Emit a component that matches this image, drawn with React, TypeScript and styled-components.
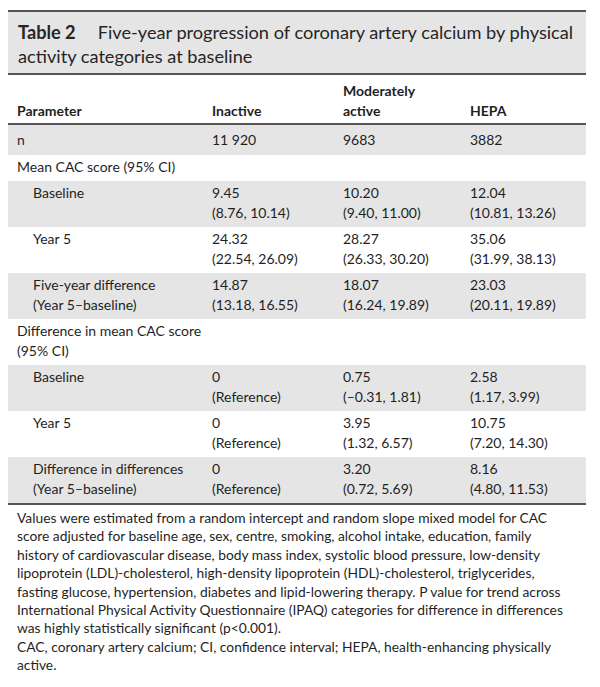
import React from "react";
import styled, { createGlobalStyle } from "styled-components";

const GlobalStyle = createGlobalStyle`
  html, body { margin: 0; padding: 0; background: #ffffff; }
  body { font-family: Lato, "Liberation Sans", sans-serif; color: #1f1f1f; }
`;

const Page = styled.div`
  padding: 10px 14px 0 8px;
  width: 578px;
`;

const TitleBar = styled.div`
  background: #e5e5e5;
  border-top: 2px solid #555;
  border-bottom: 2px solid #555;
  padding: 8px 10px 5px 10px;
  font-size: 18.2px;
  line-height: 24px;
  color: #262626;
`;

const TitleLabel = styled.span`
  font-weight: 700;
  margin-right: 22px;
`;

const TitleLine = styled.div`
  white-space: nowrap;
`;

const Grid = styled.div<{ $shade?: boolean; $pt?: number; $pb?: number }>`
  display: grid;
  grid-template-columns: 195px 131px 127px 1fr;
  padding: ${(p) => p.$pt ?? 2}px 0 ${(p) => p.$pb ?? 4}px 9px;
  background: ${(p) => (p.$shade ? "#e5e5e5" : "#ffffff")};
  font-size: 14px;
  line-height: 20px;
`;

const HeaderRow = styled(Grid)`
  align-items: end;
  font-weight: 700;
  border-bottom: 2px solid #555;
  padding-top: 6px;
  padding-bottom: 4px;
  height: 50px;
  box-sizing: border-box;
`;

const Cell = styled.div<{ $indent?: boolean; $span?: boolean }>`
  padding-left: ${(p) => (p.$indent ? 16 : 0)}px;
  grid-column: ${(p) => (p.$span ? "1 / span 2" : "auto")};
  white-space: nowrap;
`;

const Line = styled.div``;

const Body = styled.div`
  border-bottom: 2px solid #555;
`;

const Footnote = styled.div`
  padding: 4px 0 0 9px;
  font-size: 13.8px;
  line-height: 18.4px;
`;

const FootLine = styled.div`
  white-space: nowrap;
`;

type Row = {
  label: string[];
  indent?: boolean;
  shade?: boolean;
  values?: string[][];
  pt?: number;
  pb?: number;
};

const rows: Row[] = [
  { label: ["n"], shade: true, values: [["11 920"], ["9683"], ["3882"]], pt: 5, pb: 5 },
  { label: ["Mean CAC score (95% CI)"] },
  {
    label: ["Baseline"],
    indent: true,
    shade: true,
    values: [
      ["9.45", "(8.76, 10.14)"],
      ["10.20", "(9.40, 11.00)"],
      ["12.04", "(10.81, 13.26)"],
    ],
  },
  {
    label: ["Year 5"],
    indent: true,
    values: [
      ["24.32", "(22.54, 26.09)"],
      ["28.27", "(26.33, 30.20)"],
      ["35.06", "(31.99, 38.13)"],
    ],
  },
  {
    label: ["Five-year difference", "(Year 5–baseline)"],
    indent: true,
    shade: true,
    values: [
      ["14.87", "(13.18, 16.55)"],
      ["18.07", "(16.24, 19.89)"],
      ["23.03", "(20.11, 19.89)"],
    ],
  },
  { label: ["Difference in mean CAC score", "(95% CI)"] },
  {
    label: ["Baseline"],
    indent: true,
    shade: true,
    values: [
      ["0", "(Reference)"],
      ["0.75", "(–0.31, 1.81)"],
      ["2.58", "(1.17, 3.99)"],
    ],
  },
  {
    label: ["Year 5"],
    indent: true,
    values: [
      ["0", "(Reference)"],
      ["3.95", "(1.32, 6.57)"],
      ["10.75", "(7.20, 14.30)"],
    ],
  },
  {
    label: ["Difference in differences", "(Year 5–baseline)"],
    indent: true,
    shade: true,
    values: [
      ["0", "(Reference)"],
      ["3.20", "(0.72, 5.69)"],
      ["8.16", "(4.80, 11.53)"],
    ],
  },
];

const footLines = [
  "Values were estimated from a random intercept and random slope mixed model for CAC",
  "score adjusted for baseline age, sex, centre, smoking, alcohol intake, education, family",
  "history of cardiovascular disease, body mass index, systolic blood pressure, low-density",
  "lipoprotein (LDL)-cholesterol, high-density lipoprotein (HDL)-cholesterol, triglycerides,",
  "fasting glucose, hypertension, diabetes and lipid-lowering therapy. P value for trend across",
  "International Physical Activity Questionnaire (IPAQ) categories for difference in differences",
  "was highly statistically significant (p<0.001).",
  "CAC, coronary artery calcium; CI, confidence interval; HEPA, health-enhancing physically",
  "active.",
];

export default function App() {
  return (
    <>
      <GlobalStyle />
      <Page>
        <TitleBar>
          <TitleLine>
            <TitleLabel>Table 2</TitleLabel>Five-year progression of coronary artery calcium by physical
          </TitleLine>
          <TitleLine>activity categories at baseline</TitleLine>
        </TitleBar>
        <HeaderRow>
          <Cell>Parameter</Cell>
          <Cell>Inactive</Cell>
          <Cell>
            <Line>Moderately</Line>
            <Line>active</Line>
          </Cell>
          <Cell>HEPA</Cell>
        </HeaderRow>
        <Body>
          {rows.map((r, i) => (
            <Grid key={i} $shade={r.shade} $pt={r.pt} $pb={r.pb}>
              <Cell $indent={r.indent} $span={!r.values}>
                {r.label.map((l) => (
                  <Line key={l}>{l}</Line>
                ))}
              </Cell>
              {r.values?.map((v, j) => (
                <Cell key={j}>
                  {v.map((l) => (
                    <Line key={l}>{l}</Line>
                  ))}
                </Cell>
              ))}
            </Grid>
          ))}
        </Body>
        <Footnote>
          {footLines.map((l) => (
            <FootLine key={l}>{l}</FootLine>
          ))}
        </Footnote>
      </Page>
    </>
  );
}
